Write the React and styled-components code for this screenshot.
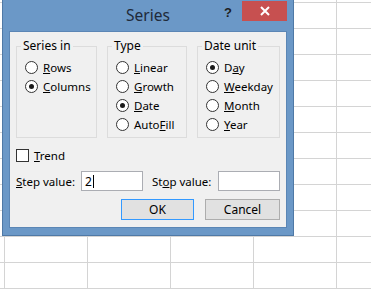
import React from 'react';
import styled, { createGlobalStyle } from 'styled-components';

const Global = createGlobalStyle`
  html, body {
    margin: 0;
    padding: 0;
  }
  body {
    width: 371px;
    height: 289px;
    overflow: hidden;
    background-color: #fff;
    background-image:
      linear-gradient(to right, #d4d4d4 1px, transparent 1px),
      linear-gradient(to bottom, #d4d4d4 1px, transparent 1px);
    background-size: 83px 26px;
    background-position: 4px 2px;
    font-family: 'Noto Sans', 'Open Sans', sans-serif;
  }
`;

const Window = styled.div`
  margin-left: 2px;
  width: 290px;
  height: 235px;
  background: #6b98c7;
  border: 1px solid #4f79a6;
  border-top: none;
  display: flex;
  flex-direction: column;
`;

const TitleBar = styled.div`
  height: 31px;
  flex: none;
  position: relative;
  display: flex;
  align-items: center;
  justify-content: center;
  .title {
    font-size: 15.5px;
    color: #1f2a3a;
    margin-top: -1px;
  }
`;

const Controls = styled.div`
  position: absolute;
  top: 1px;
  right: 6px;
  display: flex;
  align-items: flex-start;
  .help {
    font-family: 'Liberation Sans', sans-serif;
    font-weight: bold;
    font-size: 13px;
    color: #1e1e1e;
    margin-right: 10px;
    margin-top: 4px;
  }
`;

const CloseButton = styled.div`
  width: 45px;
  height: 20px;
  background: #c75050;
  display: flex;
  align-items: center;
  justify-content: center;
`;

const Client = styled.div`
  margin: 0 6px;
  height: 197px;
  box-sizing: border-box;
  flex: none;
  background: #f0f0f0;
  border: 1px solid #5b86b5;
  padding: 14px 6px 0 6px;
  font-size: 11.5px;
  color: #000;
`;

const Groups = styled.div`
  display: flex;
  gap: 10px;
`;

const Group = styled.div`
  position: relative;
  width: ${(p) => p.$w}px;
  height: 92px;
  border: 1px solid #dcdcdc;
  box-sizing: border-box;
  padding: 11px 0 0 8px;
`;

const Legend = styled.span`
  position: absolute;
  top: -9px;
  left: 4px;
  padding: 0 2px;
  background: #f0f0f0;
  line-height: 16px;
  font-size: 12px;
`;

const Option = styled.div`
  height: 19px;
  display: flex;
  align-items: center;
  gap: 5px;
  white-space: nowrap;
`;

const Radio = styled.span`
  width: 11px;
  height: 11px;
  border-radius: 50%;
  border: 1px solid #333;
  background: #fff;
  display: flex;
  align-items: center;
  justify-content: center;
  flex: none;
  &::after {
    content: '';
    width: 5px;
    height: 5px;
    border-radius: 50%;
    background: #1a1a1a;
    display: ${(p) => (p.$on ? 'block' : 'none')};
  }
`;

const CheckRow = styled.div`
  margin-top: 10px;
  height: 14px;
  display: flex;
  align-items: center;
  gap: 5px;
`;

const Box = styled.span`
  width: 11px;
  height: 11px;
  border: 1px solid #333;
  background: #fff;
`;

const FieldRow = styled.div`
  margin-top: 9px;
  display: flex;
  align-items: center;
`;

const FieldLabel = styled.span`
  width: ${(p) => p.$w}px;
  flex: none;
`;

const Input = styled.div`
  width: 59px;
  height: 18px;
  border: 1px solid #abadb3;
  background: #fff;
  display: flex;
  align-items: center;
  padding-left: 3px;
  box-sizing: content-box;
  margin-right: ${(p) => p.$mr || 0}px;
  font-size: 12px;
  .caret {
    width: 1px;
    height: 13px;
    background: #000;
    margin-left: 1px;
  }
`;

const Buttons = styled.div`
  margin-top: 8px;
  display: flex;
  justify-content: flex-end;
  gap: 11px;
`;

const Button = styled.div`
  width: ${(p) => p.$w}px;
  height: 21px;
  box-sizing: border-box;
  border: 1px solid ${(p) => (p.$def ? '#3399ff' : '#adadad')};
  background: #e1e1e1;
  display: flex;
  align-items: center;
  justify-content: center;
  font-size: 12px;
`;

const radios = [
  { title: 'Series in', w: 81, items: [['R', 'ows'], ['C', 'olumns']], on: 1 },
  { title: 'Type', w: 80, items: [['L', 'inear'], ['G', 'rowth'], ['D', 'ate'], ['Auto', 'F', 'ill']], on: 2 },
  { title: 'Date unit', w: 83, items: [['D', 'a', 'y'], ['W', 'eekday'], ['M', 'onth'], ['Y', 'ear']], on: 0 },
];

function Label({ parts }) {
  if (parts.length === 3) {
    if (parts[0] === 'Auto') {
      return <span>Auto<u>F</u>ill</span>;
    }
    return <span>{parts[0]}<u>{parts[1]}</u>{parts[2]}</span>;
  }
  return <span><u>{parts[0]}</u>{parts[1]}</span>;
}

export default function App() {
  return (
    <>
      <Global />
      <Window>
        <TitleBar>
          <span className="title">Series</span>
          <Controls>
            <span className="help">?</span>
            <CloseButton>
              <svg width="10" height="10" viewBox="0 0 10 10">
                <path d="M1 1 L9 9 M9 1 L1 9" stroke="#fff" strokeWidth="2" />
              </svg>
            </CloseButton>
          </Controls>
        </TitleBar>
        <Client>
          <Groups>
            {radios.map((g) => (
              <Group key={g.title} $w={g.w}>
                <Legend>{g.title}</Legend>
                {g.items.map((it, i) => (
                  <Option key={i}>
                    <Radio $on={i === g.on} />
                    <Label parts={it} />
                  </Option>
                ))}
              </Group>
            ))}
          </Groups>
          <CheckRow>
            <Box />
            <span><u>T</u>rend</span>
          </CheckRow>
          <FieldRow>
            <FieldLabel $w={65}><u>S</u>tep value:</FieldLabel>
            <Input $mr={9}>2<span className="caret" /></Input>
            <FieldLabel $w={66}>St<u>o</u>p value:</FieldLabel>
            <Input />
          </FieldRow>
          <Buttons>
            <Button $w={73} $def>OK</Button>
            <Button $w={75}>Cancel</Button>
          </Buttons>
        </Client>
      </Window>
    </>
  );
}
